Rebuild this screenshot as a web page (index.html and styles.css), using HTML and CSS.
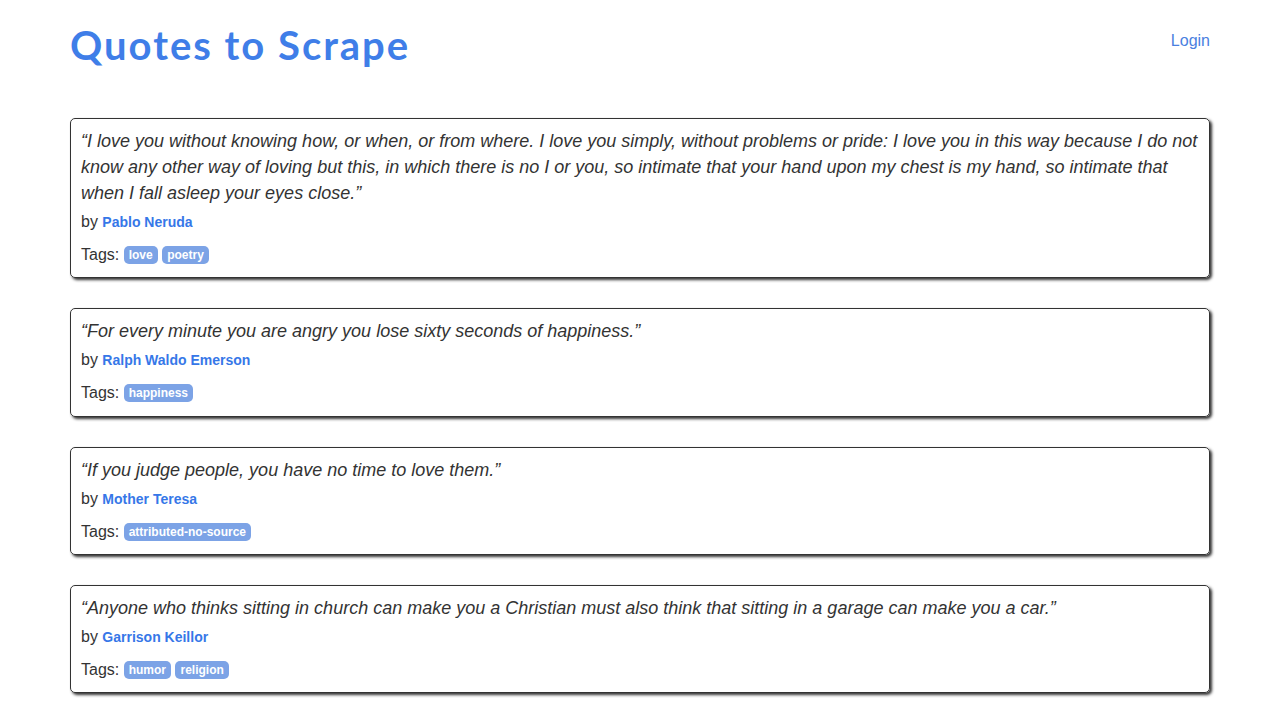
FILE: index.html
```html
<!DOCTYPE html>
<html lang="en">
<head>
<meta charset="utf-8">
<title>Quotes to Scrape</title>
<link rel="stylesheet" href="styles.css">
</head>
<body>
<div class="container">
  <header class="header-box">
    <h1 class="brand"><a href="#">Quotes to Scrape</a></h1>
    <a class="login" href="#">Login</a>
  </header>

  <div class="quote">
    <span class="text">“I love you without knowing how, or when, or from where. I love you simply, without problems or pride: I love you in this way because I do not know any other way of loving but this, in which there is no I or you, so intimate that your hand upon my chest is my hand, so intimate that when I fall asleep your eyes close.”</span>
    <span class="by">by <small class="author">Pablo Neruda</small></span>
    <div class="tags">Tags: <a class="tag" href="#">love</a> <a class="tag" href="#">poetry</a></div>
  </div>

  <div class="quote">
    <span class="text">“For every minute you are angry you lose sixty seconds of happiness.”</span>
    <span class="by">by <small class="author">Ralph Waldo Emerson</small></span>
    <div class="tags">Tags: <a class="tag" href="#">happiness</a></div>
  </div>

  <div class="quote">
    <span class="text">“If you judge people, you have no time to love them.”</span>
    <span class="by">by <small class="author">Mother Teresa</small></span>
    <div class="tags">Tags: <a class="tag" href="#">attributed-no-source</a></div>
  </div>

  <div class="quote">
    <span class="text">“Anyone who thinks sitting in church can make you a Christian must also think that sitting in a garage can make you a car.”</span>
    <span class="by">by <small class="author">Garrison Keillor</small></span>
    <div class="tags">Tags: <a class="tag" href="#">humor</a> <a class="tag" href="#">religion</a></div>
  </div>
</div>
</body>
</html>
```

FILE: styles.css
```css
* { box-sizing: border-box; }
html, body { margin: 0; padding: 0; background: #fff; }
body {
  font-family: "Liberation Sans", Arial, sans-serif;
  font-size: 16px;
  line-height: 20px;
  color: #333;
}
a { text-decoration: none; color: #3677e8; }

.container {
  width: 1170px;
  margin: 0 auto;
  padding: 0 15px;
}

.header-box {
  display: flex;
  justify-content: space-between;
  align-items: flex-start;
  height: 118px;
}
.brand {
  margin: 20px 0 0;
  font-family: "Lato", sans-serif;
  font-weight: 700;
  font-size: 40px;
  line-height: 50px;
  letter-spacing: 2px;
}
.brand a { color: #3f7ee8; }
.login {
  margin-top: 31px;
  font-size: 16px;
  line-height: 20px;
  color: #4a80e0;
}

.quote {
  border: 1px solid #333;
  border-radius: 5px;
  box-shadow: 2px 2px 3px #333;
  padding: 10px;
  margin-bottom: 30px;
}
.text {
  display: block;
  font-style: italic;
  font-size: 18px;
  line-height: 26px;
  margin-bottom: 5px;
  position: relative;
  top: -1px;
}
.by { display: block; font-size: 16px; line-height: 20px; }
.author {
  font-weight: 700;
  font-size: 14px;
  color: #3677e8;
}
.tags {
  margin-top: 10px;
  line-height: 25.3px;
  font-size: 16px;
}
.tag {
  display: inline-block;
  line-height: 14px;
  padding: 2px 5px;
  border-radius: 5px;
  background: #7ca3e6;
  color: #fff;
  font-size: 12px;
  font-weight: 700;
  vertical-align: 1px;
}
```
